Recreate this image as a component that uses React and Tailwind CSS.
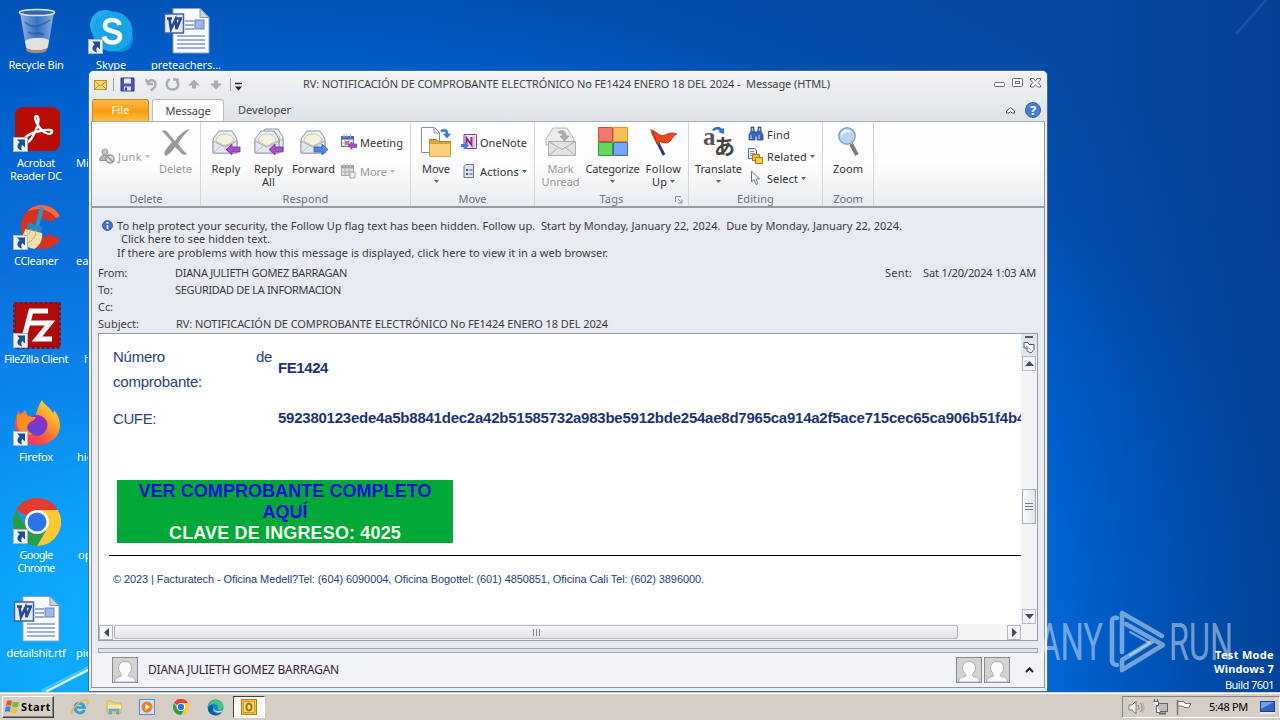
import React, { useLayoutEffect, useRef, useState } from "react";

/* Text run whose tracking is computed so that it fills a given width. */
function Fit({ w, className = "", children }) {
  const ref = useRef(null);
  const [ls, setLs] = useState(null);
  useLayoutEffect(() => {
    const el = ref.current;
    const natural = el.getBoundingClientRect().width;
    setLs((w - natural) / Math.max(1, el.textContent.length));
  }, [w, children]);
  return (
    <span
      ref={ref}
      className={"inline-block w-max shrink-0 whitespace-pre " + className}
      style={ls === null ? undefined : { letterSpacing: ls + "px" }}
    >
      {children}
    </span>
  );
}

const Caret = ({ muted }) => (
  <svg width="5" height="3" className="shrink-0">
    <path d="M0 0h5L2.500 3z" fill={muted ? "#b5b5b5" : "#666"} />
  </svg>
);

/* ---------- desktop icons ---------- */

const ShortcutArrow = () => (
  <svg className="absolute bottom-0.5 left-0" width="15" height="15" viewBox="0 0 15 15">
    <rect x="0.500" y="0.500" width="14" height="14" fill="#eef4fa" stroke="#a9b9c9" />
    <path d="M4 2.500h8v8L9.500 8C8 9 8 11 9 13.500 4.500 12.500 2.500 9 6.700 5.300z" fill="#1d4f94" />
  </svg>
);

const RecycleBin = () => (
  <svg width="48" height="48" viewBox="0 0 48 48">
    <defs>
      <linearGradient id="bin" x1="0" x2="1">
        <stop offset="0" stopColor="#b7cbe6" stopOpacity=".85" />
        <stop offset=".5" stopColor="#4b7cc4" stopOpacity=".7" />
        <stop offset="1" stopColor="#a9c0e2" stopOpacity=".85" />
      </linearGradient>
    </defs>
    <path d="M7 4l6 36c4 4 18 4 22 0l6-36z" fill="url(#bin)" />
    <path d="M12 33c5-4 18-4 24-1l-1.500 8c-4 3-17 3-21 0z" fill="#e4e2df" />
    <path d="M13 40c5 3 16 3 21 0l-.5 3c-4 3-16 3-20 0z" fill="#a78a7c" />
    <path d="M12 14c8 8 16 4 25-2M15 24c6 5 10-2 16 3" stroke="#2350a0" strokeWidth="2" fill="none" opacity=".55" />
    <ellipse cx="24" cy="4.500" rx="17.500" ry="3" fill="#3a66ac" stroke="#dbe3ec" strokeWidth="1.500" />
  </svg>
);

const Skype = () => (
  <svg width="48" height="48" viewBox="0 0 48 48">
    <circle cx="17" cy="17" r="15" fill="#28a8ea" />
    <circle cx="32" cy="31" r="13" fill="#0a8fdc" />
    <circle cx="24.500" cy="23.500" r="20" fill="#18a5e6" />
    <path d="M31.500 17c-1-4-4-5-7.500-5-4 0-7 2-7 5.500 0 7.500 15 4 15 11 0 4-3.500 6-7.500 6-4.500 0-7.500-2-8.500-6" stroke="#fff" strokeWidth="4.600" fill="none" />
  </svg>
);

const WordDoc = () => (
  <svg width="48" height="48" viewBox="0 0 48 48">
    <path d="M10 .5h27l9 9V45H10z" fill="#fafcff" stroke="#8aa0c4" />
    <path d="M37 .5v9h9z" fill="#c9d8ee" stroke="#7d95bd" />
    <path d="M22 13h9M22 17h9M22 21h9M14 28h28M14 32h28M14 36h28M14 40h28" stroke="#7d98c6" strokeWidth="1.300" />
    <rect x="32" y="12" width="9" height="9" fill="#9bb7e4" stroke="#6684b8" />
    <rect x="1.500" y="6" width="19" height="19" fill="#e6ecf7" stroke="#3f62a6" strokeWidth="1.500" />
    <path d="M4 10.500h5M13 10.500h6M6.500 11l1.500 10 4.500-9.500 1 9.500 4-10" stroke="#27489a" strokeWidth="2.600" fill="none" />
  </svg>
);

const Acrobat = () => (
  <svg width="48" height="48" viewBox="0 0 48 48">
    <rect x="2" y="1" width="45" height="44" rx="8" fill="#b80d05" />
    <path d="M12 36c-4-3 4-9 15-11 9-2 13-1 12 1-1 4-9 1-13-5-4-6-5-11-2.500-11s3 7-1 15c-3 7-7 13-10.500 11z" stroke="#fff" strokeWidth="2.400" fill="none" strokeLinejoin="round" />
  </svg>
);

const CCleaner = () => (
  <svg width="48" height="48" viewBox="0 0 48 48">
    <path d="M47 12C42 4 36 1 29 1 16 1 8 11 8 24s9 21 21 21c7 0 14-3 18-10l-11-5c-5 6-16 3-16-6s11-13 17-6z" fill="#d7331c" />
    <path d="M29 1c7 0 14 4 18 11l-4 2C36 4 22 3 14 8c4-5 9-7 15-7z" fill="#ee6a4c" />
    <path d="M31 4l-5 19-4-1 5-19z" fill="#2e94cc" />
    <path d="M16 19l14 4-3 6-14-4z" fill="#2f87bf" />
    <path d="M12 25l17 4c1 6-2 13-8 16-7-2-12-4-18-9 6-2 8-6 9-11z" fill="#f3dfae" />
    <path d="M9 33c5 0 8-3 9-8M14 39c6-2 9-7 9-13" stroke="#cba863" fill="none" />
  </svg>
);

const FileZilla = () => (
  <svg width="48" height="48" viewBox="0 0 48 48">
    <rect x="1.500" y="0.500" width="45" height="45" fill="#b00b0b" stroke="#8c0b12" strokeWidth="3" strokeDasharray="3 2" />
    <path d="M11 36l7-27h17M15 21h13M25 21h12L24 37h15" stroke="#fff" strokeWidth="5" fill="none" />
  </svg>
);

const Firefox = () => (
  <svg width="48" height="48" viewBox="0 0 48 48">
    <defs>
      <linearGradient id="fx" x1="1" y1="0" x2="0.200" y2="1">
        <stop offset="0" stopColor="#fff14f" />
        <stop offset=".4" stopColor="#ffa02b" />
        <stop offset=".75" stopColor="#ff4a40" />
        <stop offset="1" stopColor="#e8307a" />
      </linearGradient>
    </defs>
    <path d="M29 0c2 5 9 8 11 13 1-1 1-2 1-3 4 5 6 10 6 15 0 12-10 20-23 20S2 37 2 26c0-8 2-12 4-16l1 5 5-5 3 6 7 1c2-6 4-13 7-17z" fill="url(#fx)" />
    <circle cx="24" cy="26" r="10" fill="#6a3fd2" />
    <path d="M15 20c4-6 13-7 18 0 2 3 2 8-1 10 0-6-5-8-9-6-3-4-5-4-8-4z" fill="#8f2fc9" />
    <path d="M4 15l7-2 4 4h8c-1 4-7 4-8 8-2 2-1 7 5 9-9 3-15-4-16-9z" fill="#ff8c22" />
  </svg>
);

const Chrome = ({ s = 48 }) => (
  <svg width={s} height={s} viewBox="0 0 48 48">
    <path d="M24 24L3.200 12A24 24 0 0 1 44.800 12z" fill="#e33b2e" />
    <path d="M24 12h20.800A24 24 0 0 1 24 48L34.400 30z" fill="#fcc934" />
    <path d="M13.600 30L3.200 12A24 24 0 0 0 24 48l10.400-18z" fill="#2a9c48" />
    <circle cx="24" cy="24" r="12" fill="#fff" />
    <circle cx="24" cy="24" r="9.500" fill="#2d76e8" />
  </svg>
);

const desktopIcons = [
  { at: "left-[-4px] top-[8px]", label: [["Recycle Bin", 55]], Icon: RecycleBin },
  { at: "left-[71px] top-[8px]", label: [["Skype", 30]], Icon: Skype, link: true },
  { at: "left-[146px] top-[8px]", label: [["preteachers...", 70]], Icon: WordDoc },
  { at: "left-[-4px] top-[106px]", label: [["Acrobat", 38], ["Reader DC", 52]], Icon: Acrobat, link: true },
  { at: "left-[-4px] top-[204px]", label: [["CCleaner", 44]], Icon: CCleaner, link: true },
  { at: "left-[-4px] top-[302px]", label: [["FileZilla Client", 64]], Icon: FileZilla, link: true },
  { at: "left-[-4px] top-[400px]", label: [["Firefox", 34]], Icon: Firefox, link: true },
  { at: "left-[-4px] top-[498px]", label: [["Google", 33], ["Chrome", 37]], Icon: Chrome, link: true },
  { at: "left-[-4px] top-[596px]", label: [["detailshit.rtf", 59]], Icon: WordDoc },
];

const hiddenLabels = [
  { at: "left-[76px] top-[156px]", text: "Mic" },
  { at: "left-[76px] top-[254px]", text: "eas" },
  { at: "left-[84px] top-[352px]", text: "ho" },
  { at: "left-[77px] top-[450px]", text: "hig" },
  { at: "left-[78px] top-[548px]", text: "opp" },
  { at: "left-[76px] top-[646px]", text: "pict" },
];

/* ---------- ribbon icons ---------- */

const Envelope = ({ x = 0, y = 0 }) => (
  <g transform={`translate(${x} ${y})`}>
    <path d="M1 11L7 3h13l5 8v14H1z" fill="#eef1f5" stroke="#8b95a5" />
    <path d="M4 13c0-4 4-7 9-7s9 3 9 7l-9 5z" fill="#f5f1df" stroke="#bab59b" strokeWidth=".7" />
    <path d="M1 13l12 6 12-6v12H1z" fill="#e3e8f0" stroke="#8b95a5" strokeWidth=".8" />
    <path d="M1 25l9-8M25 25l-9-8" stroke="#a9b2c1" strokeWidth=".7" />
  </g>
);
const ArrowL = ({ x, y }) => (
  <path transform={`translate(${x} ${y})`} d="M0 5.500L6 0v3h8v5H6v3z" fill="#a64fcb" stroke="#7c2ba3" strokeWidth=".8" />
);
const ReplyIcon = () => (
  <svg width="32" height="32"><Envelope x={2} y={1} /><ArrowL x={16} y={17} /></svg>
);
const ReplyAllIcon = () => (
  <svg width="32" height="32"><Envelope x={5} y={-1} /><Envelope x={1} y={1} /><ArrowL x={16} y={17} /></svg>
);
const ForwardIcon = () => (
  <svg width="32" height="32">
    <Envelope x={2} y={1} />
    <path d="M30 22.500L24 17v3h-8v5h8v3z" fill="#4b8ce0" stroke="#2a5fae" strokeWidth=".8" />
  </svg>
);
const DeleteIcon = () => (
  <svg width="32" height="32">
    <path d="M2 4c3-2 5 0 7 3l6 7C19 8 24 3 30 2c-4 4-9 9-12 15 3 4 6 7 9 10-4 2-6-1-8-3l-4-4c-3 4-5 7-9 9-2-1-2-3-1-5 2-3 4-6 7-9z" fill="#9b9b9b" />
  </svg>
);
const JunkIcon = () => (
  <svg width="16" height="16">
    <circle cx="6" cy="4" r="3" fill="#c6c6c6" stroke="#999" />
    <path d="M.5 12.500c0-7 10-7 10 0z" fill="#b8b8b8" stroke="#999" />
    <circle cx="11" cy="11" r="4" fill="#dedede" stroke="#959595" strokeWidth="1.400" />
    <path d="M8 8l6 6" stroke="#959595" strokeWidth="1.400" />
  </svg>
);
const MeetingIcon = ({ muted }) => (
  <svg width="16" height="16">
    <rect x=".5" y="2.500" width="12" height="10" fill={muted ? "#e4e4e4" : "#f4f7fd"} stroke={muted ? "#a9a9a9" : "#5c76b5"} />
    <path d="M.5 4h12" stroke={muted ? "#a0a0a0" : "#4a62b0"} strokeWidth="3" />
    <path d="M3 0v4M6 0v4M9.500 0v4" stroke={muted ? "#ccc" : "#93a7d8"} />
    <path d="M1 9h11M4 6v6M8 6v6" stroke={muted ? "#aaa" : "#9db0dc"} />
    {muted ? (
      <path d="M9 9h5v6H9z" fill="#eee" stroke="#a8a8a8" />
    ) : (
      <>
        <path d="M4 7h4v4H4z" fill="#e46c6c" />
        <path d="M7 11.500L11 8v2h5v3.500h-5v2z" fill="#a64fcb" stroke="#7c2ba3" strokeWidth=".6" />
      </>
    )}
  </svg>
);
const MoveIcon = () => (
  <svg width="32" height="32">
    <path d="M1.500 .5h13l5 5v20h-18z" fill="#fdfdff" stroke="#8392ad" />
    <path d="M14 1v5h5" fill="#e0e6f0" stroke="#8392ad" />
    <path d="M21 3c5-2 7 0 7 4h2.500L27 11l-3.500-4H26c0-2-2-3-5-2z" fill="#3f7fd6" stroke="#2a5fae" strokeWidth=".5" />
    <path d="M9.500 12.500h7l2 2h12v14h-21z" fill="#e0a63e" stroke="#b37f24" />
    <path d="M9.500 16.500h21V29.500h-21z" fill="#f6cf77" stroke="#c9933a" strokeWidth=".7" />
  </svg>
);
const OneNoteIcon = () => (
  <svg width="16" height="16">
    <path d="M3 .5h12.500v14H3z" fill="#f4e8f5" stroke="#8c3c93" />
    <path d="M5.500 11V4l5 7V3" stroke="#7e2a86" strokeWidth="2" fill="none" />
    <path d="M13 2v11" stroke="#c79acb" />
    <path d="M0 10h4V7.500l4 4-4 4V13H0z" fill="#3d7fd6" />
  </svg>
);
const ActionsIcon = () => (
  <svg width="16" height="16">
    <path d="M5 1.500h7.500v13H3v-11z" fill="#dfe5ef" stroke="#68758d" />
    <path d="M5 6h2v2H5zM5 10h2v2H5z" fill="#3b5380" />
    <path d="M8.500 7h3M8.500 11h3" stroke="#3b5380" />
  </svg>
);
const MarkUnreadIcon = () => (
  <svg width="32" height="32">
    <path d="M1 12L8 1h14l7 11v6H1z" fill="#ededed" stroke="#b5b5b5" />
    <path d="M3.500 14.500h27v14h-27z" fill="#e2e2e2" stroke="#adadad" />
    <path d="M3.500 14.500l13.500 8 13.500-8M3.500 28.500l10-8M30.500 28.500l-10-8" fill="none" stroke="#adadad" />
    <path d="M13 5c5-3 8 0 8 4h3l-4.500 5-4.500-5h3c0-2-1-3-4-3z" fill="#b0b0b0" stroke="#8c8c8c" strokeWidth=".6" />
  </svg>
);
const CategorizeIcon = () => (
  <svg width="32" height="32">
    <path d="M1.500 .5h14v14h-14z" fill="#f4786e" stroke="#d9443c" />
    <path d="M16.500 .5h14v14h-14z" fill="#f8bf58" stroke="#d8922c" />
    <path d="M1.500 15.500h14v13h-14z" fill="#63d85d" stroke="#2fa02d" />
    <path d="M16.500 15.500h14v13h-14z" fill="#79a5f2" stroke="#3a68c4" />
  </svg>
);
const FlagIcon = () => (
  <svg width="32" height="32">
    <path d="M4 4l12 24" stroke="#2a3f7c" strokeWidth="3" />
    <path d="M2 2l3.500 1 6 14-2.500 1z" fill="#e34a20" />
    <path d="M5 4c5 1 6 6 12 4 4-2 7-3 12-1-5 2-6 9-11 9-4 0-6-3-9 1z" fill="#e8481c" stroke="#b22e0c" strokeWidth=".8" />
  </svg>
);
const TranslateIcon = () => (
  <svg width="32" height="32">
    <path d="M9 3c3-4 8-4 10-1l2-1v6l-6-2 2-1c-2-2-4-2-6 0z" fill="#2f74cc" />
    <text x="0" y="18" className="font-['Liberation_Serif',serif] text-[25px] font-bold" fill="#555">a</text>
    <text x="11" y="27" className="font-['Noto_Sans_CJK_JP',sans-serif] text-[21px] font-bold" fill="#444">あ</text>
  </svg>
);
const FindIcon = () => (
  <svg width="16" height="16">
    <path d="M3 1h3v3l1 2h2l1-2V1h3v4l2 4v5H9v-4H7v4H1V9l2-4z" fill="#3d66b0" stroke="#274a8c" strokeWidth=".8" />
    <path d="M3 9v4M11 9v4M4.500 2v3M11.500 2v3" stroke="#a9c3ec" strokeWidth="1.300" />
  </svg>
);
const RelatedIcon = () => (
  <svg width="16" height="16">
    <path d="M.5.500h6l2 2v8h-8z" fill="#edf2fb" stroke="#51689a" />
    <path d="M2 3.500h4M2 5.500h5M2 7.500h3" stroke="#7f95c0" />
    <path d="M4.500 6.500h7v6h-7z" fill="#f4c02e" stroke="#a8781b" />
    <path d="M7.500 9.500h7v6h-7z" fill="#f8cc50" stroke="#a8781b" />
  </svg>
);
const SelectIcon = () => (
  <svg width="16" height="16">
    <path d="M3.500 1v11l2.500-2.500 2 5 2-1-2-4.500h3.500z" fill="#fafafa" stroke="#66748e" />
  </svg>
);
const ZoomIcon = () => (
  <svg width="32" height="32">
    <path d="M19 17l6 11" stroke="#7d7d7d" strokeWidth="4" />
    <circle cx="15" cy="9" r="8.200" fill="#b5d5f5" stroke="#86a3c6" strokeWidth="1.600" />
    <path d="M9 11c1-5 5-7 11-5-2-5-12-5-11 5z" fill="#f2f8ff" />
  </svg>
);

function Big({ w, Icon, lines, muted, caret }) {
  return (
    <div className={`${w} flex shrink-0 flex-col items-center ${muted ? "text-[#9a9a9a]" : "text-[#333]"}`}>
      <Icon />
      <div className="h-[3px]" />
      {lines.map(([t, n], i) => (
        <div key={t} className="flex h-[13px] items-center gap-[3px]">
          <Fit w={n}>{t}</Fit>
          {caret === "inline" && i === lines.length - 1 && <Caret />}
        </div>
      ))}
      {caret === "below" && <div className="pt-[5px]"><Caret /></div>}
    </div>
  );
}

function Small({ Icon, label, w, muted, caret }) {
  return (
    <div className={`flex h-[22px] items-center gap-[3px] ${muted ? "text-[#9a9a9a]" : "text-[#333]"}`}>
      <Icon muted={muted} />
      <Fit w={w}>{label}</Fit>
      {caret && <Caret muted={muted} />}
    </div>
  );
}

function Group({ w, label, lw, children, launcher }) {
  return (
    <div className={`${w} relative flex shrink-0 flex-col border-r border-[#d4d7da] pt-[5px]`}>
      <div className="flex h-[64px] shrink-0 items-start">{children}</div>
      <div className="flex h-[14px] items-center justify-center text-[#6a7080]">
        <Fit w={lw}>{label}</Fit>
      </div>
      {launcher && (
        <svg className="absolute bottom-[2px] right-[5px]" width="8" height="8">
          <path d="M.5 6V.5H6M3 3l4 4M7 3.500V7H3.500" fill="none" stroke="#8a8f99" />
        </svg>
      )}
    </div>
  );
}

const Ribbon = () => (
  <div className="flex h-[87px] shrink-0 border-b-2 border-t border-[#979ba2] border-t-[#a9adb3] bg-gradient-to-b from-white via-[#fdfdfe] to-[#e9ecf0]">
    <Group w="w-[109px]" label="Delete" lw={33}>
      <div className="w-[60px] pl-[7px] pt-[18px]">
        <Small Icon={JunkIcon} label="Junk" w={24} muted caret />
      </div>
      <Big w="w-[47px]" Icon={DeleteIcon} lines={[["Delete", 33]]} muted />
    </Group>
    <Group w="w-[210px]" label="Respond" lw={46}>
      <Big w="w-[50px]" Icon={ReplyIcon} lines={[["Reply", 29]]} />
      <Big w="w-[35px]" Icon={ReplyAllIcon} lines={[["Reply", 29], ["All", 13]]} />
      <Big w="w-[55px]" Icon={ForwardIcon} lines={[["Forward", 43]]} />
      <div className="flex flex-col gap-[7px] pt-[4px]">
        <Small Icon={MeetingIcon} label="Meeting" w={43} />
        <Small Icon={MeetingIcon} label="More" w={27} muted caret />
      </div>
    </Group>
    <Group w="w-[124px]" label="Move" lw={28}>
      <Big w="w-[50px]" Icon={MoveIcon} lines={[["Move", 28]]} caret="below" />
      <div className="flex flex-col gap-[7px] pt-[4px]">
        <Small Icon={OneNoteIcon} label="OneNote" w={47} />
        <Small Icon={ActionsIcon} label="Actions" w={39} caret />
      </div>
    </Group>
    <Group w="w-[154px]" label="Tags" lw={24} launcher>
      <Big w="w-[51px]" Icon={MarkUnreadIcon} lines={[["Mark", 26], ["Unread", 38]]} muted />
      <Big w="w-[53px]" Icon={CategorizeIcon} lines={[["Categorize", 54]]} caret="below" />
      <Big w="w-[49px]" Icon={FlagIcon} lines={[["Follow", 36], ["Up", 15]]} caret="inline" />
    </Group>
    <Group w="w-[134px]" label="Editing" lw={37}>
      <Big w="w-[59px]" Icon={TranslateIcon} lines={[["Translate", 47]]} caret="below" />
      <div className="-mt-[4px] flex flex-col">
        <Small Icon={FindIcon} label="Find" w={23} />
        <Small Icon={RelatedIcon} label="Related" w={40} caret />
        <Small Icon={SelectIcon} label="Select" w={31} caret />
      </div>
    </Group>
    <Group w="w-[51px]" label="Zoom" lw={29}>
      <Big w="w-[50px]" Icon={ZoomIcon} lines={[["Zoom", 30]]} />
    </Group>
  </div>
);

/* ---------- window chrome ---------- */

const TitleBar = () => (
  <div className="flex h-[26px] shrink-0 items-center text-[#444]">
    <svg width="150" height="20" viewBox="0 0 150 20">
      <rect x="2.500" y="5.500" width="12" height="9" fill="#fbd978" stroke="#c78f20" />
      <path d="M2.500 6l6 5 6-5M2.500 14.500l4-4M14.500 14.500l-4-4" fill="none" stroke="#c78f20" />
      <path d="M21.500 3v13M138.500 3v13" stroke="#9a9ea6" />
      <path d="M29 3h13v13H29z" fill="#4e55b4" stroke="#34398c" />
      <path d="M32 3.500h7v5h-7z" fill="#e9ecf8" />
      <path d="M32 11.500h7v4h-7z" fill="#dadff0" />
      <path d="M33 12.500h2v3h-2z" fill="#34398c" />
      <path d="M54 4l2 5h5M55.500 8.500c2-5 8-4 8 .5 0 3-2 5-5 6.500" stroke="#a9adb3" strokeWidth="2.400" fill="none" />
      <path d="M78 4c-5 3-4 10.500 2.500 10.500s7-6.500 4-9M81 4.500h4.500v4" stroke="#a9adb3" strokeWidth="2.400" fill="none" />
      <path d="M102 4.500l6 6h-4v3h-4v-3h-4z" fill="#a9adb3" />
      <path d="M124 14.500l6-6h-4v-3h-4v3h-4z" fill="#a9adb3" />
      <path d="M143 8.500h7" stroke="#222" strokeWidth="1.400" />
      <path d="M143 11.500h7l-3.500 4z" fill="#222" />
    </svg>
    <div className="flex flex-1 justify-start pb-[4px] pl-[61px]">
      <Fit w={527}>RV: NOTIFICACIÓN DE COMPROBANTE ELECTRÓNICO No FE1424 ENERO 18 DEL 2024 -  Message (HTML)</Fit>
    </div>
    <svg width="50" height="14" viewBox="0 0 50 14" className="mb-[4px] mr-[1px]">
      <rect x="1.500" y="6.500" width="10" height="4" rx="1" fill="#fff" stroke="#666b75" />
      <rect x="19.500" y="2.500" width="10" height="8" rx="1" fill="#fff" stroke="#666b75" />
      <rect x="22.500" y="5.500" width="4" height="2" fill="#fff" stroke="#666b75" />
      <path d="M37.500 2.500h3l2 2.500 2-2.500h3v1.500L45 6.500l2.500 3v1.500h-3l-2-2.500-2 2.500h-3V9.500l2.500-3-2.500-2.500z" fill="#fff" stroke="#666b75" />
    </svg>
  </div>
);

const Tabs = () => (
  <div className="flex h-[24px] shrink-0 items-end text-[#444]">
    <div className="flex h-[23px] w-[57px] items-center justify-center rounded-t-[3px] border border-b-0 border-[#c98a1c] bg-gradient-to-b from-[#f9bb45] via-[#fb9b08] to-[#fdc13c] pb-[3px] text-white">
      <Fit w={18}>File</Fit>
    </div>
    <div className="-mb-px ml-[3px] flex h-[24px] w-[72px] items-center justify-center rounded-t-[3px] border border-b-0 border-[#b7bbc2] bg-white pb-[3px]">
      <Fit w={45}>Message</Fit>
    </div>
    <div className="flex h-[23px] flex-1 items-center pb-[2px] pl-[14px]">
      <Fit w={53}>Developer</Fit>
    </div>
    <div className="flex h-[24px] items-center gap-[9px] pb-px pr-[3px]">
      <svg width="11" height="8"><path d="M1.500 5l4-3.500 4 3.500v2h-2.500L5.500 5.500 4 7H1.500z" fill="#fff" stroke="#555" /></svg>
      <svg width="16" height="16">
        <circle cx="8" cy="8" r="7.500" fill="#4a7fd2" stroke="#3460aa" />
        <text x="8" y="12.500" textAnchor="middle" className="font-['Noto_Sans',sans-serif] text-[13px] font-bold" fill="#fff">?</text>
      </svg>
    </div>
  </div>
);

const Header = () => (
  <div className="flex h-[125px] shrink-0 flex-col pl-[6px] pt-[11px] text-[#3b3b3b]">
    <div className="flex">
      <svg width="11" height="11" className="ml-[4px] mt-px">
        <circle cx="5.500" cy="5.500" r="5" fill="#4372c4" stroke="#2f5ba8" strokeWidth=".8" />
        <path d="M5.500 2v2M5.500 5v4" stroke="#fff" strokeWidth="1.500" />
      </svg>
      <div className="ml-[4px] flex flex-col">
        <Fit w={785} className="h-[13px]">To help protect your security, the Follow Up flag text has been hidden. Follow up.  Start by Monday, January 22, 2024.  Due by Monday, January 22, 2024.</Fit>
        <div className="h-[14px] pl-[4px]"><Fit w={149}>Click here to see hidden text.</Fit></div>
        <Fit w={491} className="h-[14px]">If there are problems with how this message is displayed, click here to view it in a web browser.</Fit>
      </div>
    </div>
    <div className="mt-[4px] grid grid-cols-[77px_1fr_auto] leading-[17px]">
      <Fit w={29}>From:</Fit>
      <Fit w={172}>DIANA JULIETH GOMEZ BARRAGAN</Fit>
      <div className="flex gap-[11px] pr-[8px]">
        <Fit w={27}>Sent:</Fit>
        <Fit w={113}>Sat 1/20/2024 1:03 AM</Fit>
      </div>
      <Fit w={15}>To:</Fit>
      <Fit w={166} className="col-span-2">SEGURIDAD DE LA INFORMACION</Fit>
      <Fit w={15} className="col-span-3">Cc:</Fit>
      <Fit w={41}>Subject:</Fit>
      <Fit w={432} className="col-span-2 ml-px">RV: NOTIFICACIÓN DE COMPROBANTE ELECTRÓNICO No FE1424 ENERO 18 DEL 2024</Fit>
    </div>
  </div>
);

const SbButton = ({ d }) => (
  <div className="flex h-[15px] w-[14px] shrink-0 items-center justify-center border border-[#b4b9c2] bg-[#f3f5f8]">
    <svg width="9" height="9"><path d={d} fill="#42485a" /></svg>
  </div>
);

const MessageBody = () => (
  <div className="mx-[6px] flex h-[308px] shrink-0 flex-col border border-[#979da9] bg-white">
    <div className="flex min-h-0 flex-1">
      <div className="flex min-w-0 flex-1 flex-col overflow-hidden pt-[10px] font-['Liberation_Sans',Arial,sans-serif] text-[#26417f]">
        <div className="grid shrink-0 grid-cols-[165px_1fr] items-center pl-[14px] text-[15px] leading-[25px]">
          <div>
            <div className="flex justify-between pr-[6px]">
              <Fit w={52}>Número</Fit>
              <Fit w={16}>de</Fit>
            </div>
            <Fit w={89}>comprobante:</Fit>
          </div>
          <Fit w={50} className="mb-[4px] font-bold text-[#1c3473]">FE1424</Fit>
        </div>
        <div className="mt-[12px] grid shrink-0 grid-cols-[165px_1fr] items-center pl-[14px] text-[15px] leading-[25px]">
          <Fit w={43}>CUFE:</Fit>
          <Fit w={747} className="-mt-[2px] font-bold text-[#1c3473]">592380123ede4a5b8841dec2a42b51585732a983be5912bde254ae8d7965ca914a2f5ace715cec65ca906b51f4b4</Fit>
        </div>
        <div className="ml-[18px] mt-[49px] flex h-[63px] w-[336px] shrink-0 flex-col items-center bg-[#00a837] pt-px text-[18px] font-bold leading-[21px] text-[#0b10d8]">
          <Fit w={293}>VER COMPROBANTE COMPLETO</Fit>
          <Fit w={45}>AQUÍ</Fit>
          <Fit w={232} className="text-[#f4fff0]">CLAVE DE INGRESO: 4025</Fit>
        </div>
        <div className="ml-[10px] mt-[12px] h-px shrink-0 bg-black" />
        <div className="mt-[16px] pl-[14px] text-[11px] leading-[14px]">
          <Fit w={591}>© 2023 | Facturatech - Oficina Medell?Tel: (604) 6090004, Oficina Bogotŧel: (601) 4850851, Oficina Cali Tel: (602) 3896000.</Fit>
        </div>
      </div>
      <div className="flex w-[16px] shrink-0 flex-col items-center bg-[#f3f4f6]">
        <div className="flex h-[22px] w-full shrink-0 justify-center bg-[#e1e5ec]">
          <svg width="14" height="22">
            <path d="M3 3h8" stroke="#555b68" strokeWidth="2" />
            <path d="M2 8.500h4l1 2h5v5l-3 3.500-4-2v-3H2z" fill="#fff" stroke="#555b68" />
            <path d="M4 12l5 4" stroke="#888" />
          </svg>
        </div>
        <SbButton d="M0 7h9L4.500 2z" />
        <div className="h-[118px] shrink-0" />
        <div className="flex h-[35px] w-[14px] shrink-0 flex-col items-center justify-center gap-[2px] border border-[#a7adb7] bg-gradient-to-r from-[#fbfcfd] to-[#e1e4e9]">
          <div className="h-px w-[8px] bg-[#7b818c]" />
          <div className="h-px w-[8px] bg-[#7b818c]" />
          <div className="h-px w-[8px] bg-[#7b818c]" />
        </div>
        <div className="flex-1" />
        <SbButton d="M0 2h9L4.500 7z" />
      </div>
    </div>
    <div className="flex h-[16px] shrink-0 items-center bg-[#f3f4f6] pr-[16px]">
      <SbButton d="M7 0v9L2 4.500z" />
      <div className="ml-[1px] flex h-[14px] w-[844px] items-center justify-center gap-[2px] rounded-[2px] border border-[#b4b9c2] bg-gradient-to-b from-[#f6f7f9] to-[#e2e4e8]">
        <div className="h-[7px] w-px bg-[#7b818c]" />
        <div className="h-[7px] w-px bg-[#7b818c]" />
        <div className="h-[7px] w-px bg-[#7b818c]" />
      </div>
      <div className="flex-1" />
      <SbButton d="M2 0v9l5-4.500z" />
    </div>
  </div>
);

const Avatar = () => (
  <svg width="26" height="26">
    <rect x=".5" y=".5" width="25" height="25" fill="#d3d3d3" stroke="#8a8a8a" />
    <path d="M2.500 25c0-4 3-5 7-6 1-2-3-4-3-8 0-4 3-6.500 6.500-6.500s6.500 2.500 6.500 6.500c0 4-4 6-3 8 4 1 7 2 7 6z" fill="#fafafa" stroke="#aaa" />
  </svg>
);

const MailWindow = () => (
  <div className="absolute left-[88px] top-[70px] flex h-[622px] w-[960px] flex-col overflow-hidden rounded-t-[6px] border border-[#3f6c94] bg-[#eceef2] px-[2px] pb-[3px]">
    <div className="-mx-[2px] flex h-[50px] shrink-0 flex-col border-t border-white bg-gradient-to-b from-[#f1f3f5] to-[#e0e4e8] px-[3px]">
      <TitleBar />
      <Tabs />
    </div>
    <div className="flex min-h-0 flex-1 flex-col border border-t-0 border-[#8e93a1] bg-[#e8ebf2]">
      <Ribbon />
      <Header />
      <MessageBody />
      <div className="mx-[6px] mt-[7px] h-[5px] shrink-0 border border-[#a2a7b5] bg-[#dfe2ea]" />
      <div className="flex min-h-0 flex-1 items-center bg-[#f1f3f6] pl-[20px] pr-[10px]">
        <Avatar />
        <div className="ml-[10px] flex-1 pb-[2px] text-[12px] text-[#3b2438]">
          <Fit w={191}>DIANA JULIETH GOMEZ BARRAGAN</Fit>
        </div>
        <div className="flex gap-[2px]"><Avatar /><Avatar /></div>
        <svg width="9" height="6" className="ml-[15px]"><path d="M1 5l3.500-3.500L8 5" stroke="#222" strokeWidth="2" fill="none" /></svg>
      </div>
    </div>
  </div>
);

/* ---------- taskbar ---------- */

const WinFlag = () => (
  <svg width="16" height="16" viewBox="0 0 16 16">
    <path d="M3 2c2-1 3-1 5 0L7 7C5 6 4 6 2 7z" fill="#e8532a" />
    <path d="M9 2.500c2 1 4 1 6 0l-1 5c-2 1-4 1-6 0z" fill="#76b83a" />
    <path d="M1.700 8c2-1 3-1 5 0l-1 5c-2-1-3-1-5 0z" fill="#3a86dc" />
    <path d="M7.700 8.500c2 1 4 1 6 0l-1 5c-2 1-4 1-6 0z" fill="#f6c22c" />
  </svg>
);
const IE = () => (
  <svg width="18" height="18">
    <path d="M13.500 12c-3 5-9.500 3-9.500-2.500S12 4 13.500 9.500H5" stroke="#2f9fe0" strokeWidth="2.600" fill="none" />
    <path d="M1 16C-1 12 10 1 16 2c2 1 1 3 0 5" stroke="#e9b83a" strokeWidth="1.400" fill="none" />
  </svg>
);
const Explorer = () => (
  <svg width="18" height="18">
    <path d="M2 3h5l1 2h8v10H2z" fill="#f1d375" stroke="#c9a33f" strokeWidth=".6" />
    <path d="M3 7h13v4H3z" fill="#faeaa9" />
    <path d="M4 16v-5h10v5h-2.500v-3h-5v3z" fill="#6cb4dd" stroke="#3e88b5" strokeWidth=".5" />
  </svg>
);
const Player = () => (
  <svg width="16" height="16">
    <rect x=".5" y=".5" width="15" height="15" fill="#cfe1f4" stroke="#5d8dc0" />
    <circle cx="8" cy="8" r="5.500" fill="#f0821a" />
    <path d="M6.500 5v6l4.500-3z" fill="#fff" />
  </svg>
);
const Edge = () => (
  <svg width="17" height="17">
    <circle cx="8.500" cy="8.500" r="8" fill="#1683cf" />
    <path d="M1 7C3-1 15-1 16.500 7c0 4-4 5-6 3.500C12 8 10 5 7 5S2 6 1 9z" fill="#3fc77e" />
    <path d="M6 8c-2 5 3 8 8 6-5 5-13 1-13-5 1-4 5-3 5-1z" fill="#0f58a8" />
    <path d="M7 8c-1 4 4 5 9 3l-1 2C9 15 5 12 7 8z" fill="#d4cec6" />
  </svg>
);
const Outlook = () => (
  <svg width="16" height="16">
    <rect x=".5" y=".5" width="15" height="15" fill="#f3c440" stroke="#b57f14" />
    <rect x="2.500" y="2.500" width="11" height="11" fill="#fbe08a" stroke="#d19b25" />
    <ellipse cx="8" cy="8" rx="2.600" ry="3.500" fill="none" stroke="#b2740b" strokeWidth="2" />
  </svg>
);

const Taskbar = () => (
  <div className="relative flex h-[28px] shrink-0 items-center border-t border-[#d4cec6] bg-[#d5cec6] pt-px shadow-[inset_0_1px_0_#fff]">
    <div className="ml-[2px] flex h-[22px] w-[52px] items-center border border-b-[#404040] border-l-white border-r-[#404040] border-t-white pl-px shadow-[inset_-1px_-1px_0_#8a857f]">
      <WinFlag />
      <Fit w={30} className="-mt-px ml-px text-[11px] font-bold text-black">Start</Fit>
    </div>
    <div className="ml-[17px] flex items-center">
      <div className="w-[34px]"><IE /></div>
      <div className="w-[34px]"><Explorer /></div>
      <div className="w-[34px]"><Player /></div>
      <div className="w-[34px]"><Chrome s={16} /></div>
      <div className="w-[26px]"><Edge /></div>
    </div>
    <div className="flex h-[22px] w-[32px] items-center justify-center border border-b-white border-l-[#404040] border-r-white border-t-[#404040] bg-[#fbfaf8]">
      <Outlook />
    </div>
    <div className="flex-1" />
    <div className="flex h-[22px] w-[158px] items-center border border-b-white border-l-[#8a857f] border-r-white border-t-[#8a857f] pl-[5px] text-black">
      <svg width="68" height="18">
        <path d="M1 7h3l4-4v13l-4-4H1z" fill="#fff" stroke="#777" />
        <path d="M10 7c1 2 1 3 0 5M12.500 5c2 3 2 6 0 9" fill="none" stroke="#777" />
        <path d="M14.500 4c2 4 2 7 0 11" fill="none" stroke="#aaa" />
        <rect x="28.500" y="5.500" width="11" height="8" fill="#bdbdbd" stroke="#666" />
        <path d="M31 15.500h7" stroke="#666" strokeWidth="2" />
        <path d="M25.500 3.500h5v4h-2v7h4M26.500 1v3M29.500 1v3" fill="#fff" stroke="#666" />
        <path d="M49.500 2v15" stroke="#777" strokeWidth="1.500" />
        <path d="M50 3.500h6l1 2h6l-2 4h-5l-1-1.500h-5z" fill="#fff" stroke="#777" />
      </svg>
      <Fit w={39} className="-mt-px ml-[13px]">5:48 PM</Fit>
      <svg width="16" height="14" className="ml-[12px]">
        <rect x=".5" y="1.500" width="14" height="10" fill="#2c65c4" stroke="#1a3f86" />
        <path d="M1 2h13L1 9z" fill="#6fa3e6" />
        <path d="M0 13h15" stroke="#e9e9e9" strokeWidth="2" />
      </svg>
    </div>
  </div>
);

const Watermark = () => (
  <svg className="absolute left-[1034px] top-[604px]" width="204" height="72" viewBox="0 0 204 72">
    <g fill="#fff" fillOpacity=".45" className="font-['Roboto',sans-serif] text-[52px] font-normal">
      <text x="5" y="55.500" textLength="64" lengthAdjust="spacingAndGlyphs">ANY</text>
      <text x="135" y="55.500" textLength="64" lengthAdjust="spacingAndGlyphs">RUN</text>
    </g>
    <g fill="none" stroke="#fff" strokeOpacity=".45" strokeWidth="4.500" strokeLinejoin="round" strokeLinecap="round">
      <path d="M83 14c-4-1-5 1-5 4v39c0 2 2 4 5 4" />
      <path d="M88 48V9l40 23M92 20l37 21-41 25V56l31-19" />
      <path d="M96 28l20 11-20 12" strokeWidth="2" />
    </g>
  </svg>
);

export default function App() {
  return (
    <div className="relative flex h-[720px] w-[1280px] flex-col overflow-hidden font-['Noto_Sans','DejaVu_Sans',sans-serif] text-[11px] leading-[13px]">
      <div className="relative min-h-0 flex-1 overflow-hidden bg-[radial-gradient(1100px_700px_at_220px_660px,#14b4ff_0%,#0ca4fb_22%,#0a8bf0_38%,#0a6edb_60%,#0064d2_78%,#0058c0_90%,#044dab_100%,#0549a2_115%)]">
        <div className="absolute inset-y-0 right-0 w-[220px] bg-gradient-to-r from-transparent to-[#003a88]/60" />
        <svg className="absolute inset-0" width="1280" height="692">
          <path d="M42 692Q66 680 100 663" stroke="#7fe0ff" strokeWidth="5" opacity=".5" fill="none" />
          <path d="M46 692Q66 681 100 664" stroke="#d9f8ff" strokeWidth="2" fill="none" />
          <path d="M1236 34L1266 0" stroke="#5b8fd0" strokeWidth="3" opacity=".2" fill="none" />
        </svg>
        {desktopIcons.map(({ at, label, Icon, link }) => (
          <div key={at} className={`absolute ${at} flex w-[80px] flex-col items-center text-white`}>
            <div className="relative ml-[2px]">
              <Icon />
              {link && <ShortcutArrow />}
            </div>
            <div className="mt-[2px] flex flex-col items-center">
              {label.map(([t, n]) => <Fit key={t} w={n}>{t}</Fit>)}
            </div>
          </div>
        ))}
        {hiddenLabels.map(({ at, text }) => (
          <div key={at} className={`absolute ${at} text-white`}>{text}</div>
        ))}
        <MailWindow />
        <div className="absolute bottom-px right-[6px] flex flex-col items-end text-white">
          <Fit w={59} className="mb-px text-[11px] font-bold">Test Mode</Fit>
          <Fit w={60} className="mb-[3px] text-[11px] font-bold">Windows 7</Fit>
          <Fit w={49}>Build 7601</Fit>
        </div>
        <Watermark />
      </div>
      <Taskbar />
    </div>
  );
}
